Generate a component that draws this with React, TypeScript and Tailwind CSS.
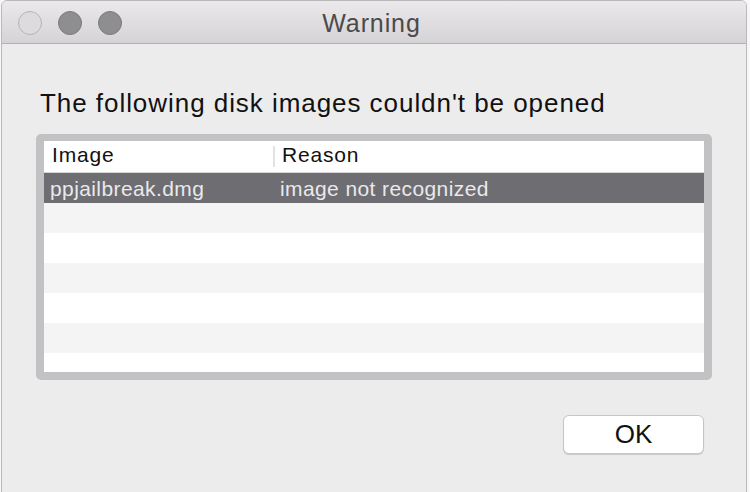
import React from "react";

const rows = [
  { image: "ppjailbreak.dmg", reason: "image not recognized", selected: true },
  { image: "", reason: "" },
  { image: "", reason: "" },
  { image: "", reason: "" },
  { image: "", reason: "" },
  { image: "", reason: "" },
  { image: "", reason: "" },
];

const App: React.FC = () => {
  return (
    <div
      className="w-[750px] h-[492px] bg-[#f7f7f7] pl-px overflow-hidden"
      style={{ fontFamily: '"Liberation Sans", Arial, sans-serif' }}
    >
      <div className="w-[746px] h-[500px] flex flex-col bg-[#ececec] border border-[#b9b9b9] rounded-t-[6px] overflow-hidden">
        {/* Title bar */}
        <div className="relative h-[43px] shrink-0 flex items-center bg-gradient-to-b from-[#ebe9eb] to-[#d5d3d5] border-b border-[#b3b3b3]">
          <div className="flex items-center gap-4 pl-[16px] pt-px">
            <span className="w-[24px] h-[24px] rounded-full bg-[#dddbdd] border border-[#b6b5b6]" />
            <span className="w-[24px] h-[24px] rounded-full bg-[#8e8d90] border border-[#7b7a7d]" />
            <span className="w-[24px] h-[24px] rounded-full bg-[#8e8d90] border border-[#7b7a7d]" />
          </div>
          <div className="absolute inset-0 flex items-center justify-center pt-px">
            <span className="text-[25px] leading-[30px] tracking-[0.9px] text-[#4b4a4b] pr-[5px]">
              Warning
            </span>
          </div>
        </div>

        {/* Body */}
        <div className="flex flex-col pl-[34px] pr-[34px]">
          <h1 className="mt-[44px] text-[26px] leading-[30px] tracking-[0.95px] text-[#111] pl-[4px]">
            The following disk images couldn't be opened
          </h1>

          <div className="mt-[16px] border-x-8 border-t-[7px] border-b-8 border-[#c2c2c4] rounded-[5px] bg-white h-[246px] overflow-hidden">
            {/* Header */}
            <div className="flex h-[32px] border-b border-[#d6d6d6] text-[21px] leading-[27px] tracking-[0.8px] text-[#111]">
              <div className="w-[229px] pl-[8px]">Image</div>
              <div className="w-[2px] h-[21px] mt-[5px] bg-[#e2e2e2]" />
              <div className="pl-[7px]">Reason</div>
            </div>
            {rows.map((row, i) => (
              <div
                key={i}
                className={
                  row.selected
                    ? "flex h-[30px] overflow-hidden bg-[#6e6d72] text-[#e9e9eb] text-[21px] leading-[32px] tracking-[0.4px]"
                    : i % 2 === 1
                    ? "flex h-[30px] bg-[#f4f4f4]"
                    : "flex h-[30px] bg-white"
                }
              >
                <div className="w-[231px] pl-[6px]">{row.image}</div>
                <div className="pl-[5px]">{row.reason}</div>
              </div>
            ))}
          </div>

          <div className="flex justify-end mt-[35px] pr-[8px]">
            <button className="w-[141px] h-[39px] rounded-[6px] bg-white border border-[#c6c6c6] shadow-[0_1px_1px_rgba(0,0,0,0.15)] text-[26px] leading-[37px] text-[#111]">
              OK
            </button>
          </div>
        </div>
      </div>
    </div>
  );
};

export default App;
